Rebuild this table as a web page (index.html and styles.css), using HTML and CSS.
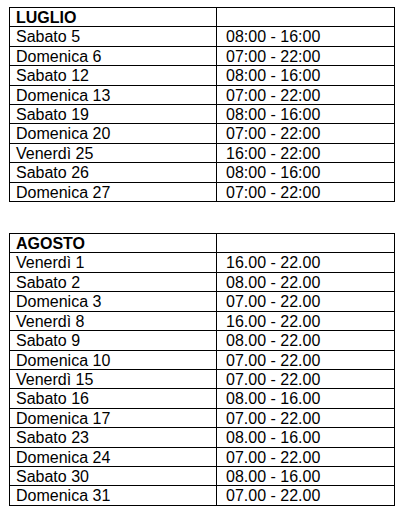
FILE: index.html
```html
<!DOCTYPE html>
<html lang="it">
<head>
<meta charset="utf-8">
<title>Orari</title>
<link rel="stylesheet" href="styles.css">
</head>
<body>
<div class="page">
  <table class="sched">
    <colgroup><col class="c1"><col class="c2"></colgroup>
    <tr class="head"><td>LUGLIO</td><td></td></tr>
    <tr><td>Sabato 5</td><td class="t">08:00 - 16:00</td></tr>
    <tr><td>Domenica 6</td><td class="t">07:00 - 22:00</td></tr>
    <tr><td>Sabato 12</td><td class="t">08:00 - 16:00</td></tr>
    <tr><td>Domenica 13</td><td class="t">07:00 - 22:00</td></tr>
    <tr><td>Sabato 19</td><td class="t">08:00 - 16:00</td></tr>
    <tr><td>Domenica 20</td><td class="t">07:00 - 22:00</td></tr>
    <tr><td>Venerdì 25</td><td class="t">16:00 - 22:00</td></tr>
    <tr><td>Sabato 26</td><td class="t">08:00 - 16:00</td></tr>
    <tr><td>Domenica 27</td><td class="t">07:00 - 22:00</td></tr>
  </table>
  <table class="sched">
    <colgroup><col class="c1"><col class="c2"></colgroup>
    <tr class="head"><td>AGOSTO</td><td></td></tr>
    <tr><td>Venerdì 1</td><td class="t">16.00 - 22.00</td></tr>
    <tr><td>Sabato 2</td><td class="t">08.00 - 22.00</td></tr>
    <tr><td>Domenica 3</td><td class="t">07.00 - 22.00</td></tr>
    <tr><td>Venerdì 8</td><td class="t">16.00 - 22.00</td></tr>
    <tr><td>Sabato 9</td><td class="t">08.00 - 22.00</td></tr>
    <tr><td>Domenica 10</td><td class="t">07.00 - 22.00</td></tr>
    <tr><td>Venerdì 15</td><td class="t">07.00 - 22.00</td></tr>
    <tr><td>Sabato 16</td><td class="t">08.00 - 16.00</td></tr>
    <tr><td>Domenica 17</td><td class="t">07.00 - 22.00</td></tr>
    <tr><td>Sabato 23</td><td class="t">08.00 - 16.00</td></tr>
    <tr><td>Domenica 24</td><td class="t">07.00 - 22.00</td></tr>
    <tr><td>Sabato 30</td><td class="t">08.00 - 16.00</td></tr>
    <tr><td>Domenica 31</td><td class="t">07.00 - 22.00</td></tr>
  </table>
</div>
</body>
</html>
```
FILE: styles.css
```css
html, body {
  margin: 0;
  padding: 0;
  background: #fff;
}
.page {
  padding: 7px 0 0 9px;
  display: flex;
  flex-direction: column;
  gap: 31px;
  font-family: "Liberation Sans", Arial, sans-serif;
  font-size: 16px;
  color: #000;
}
.sched {
  border-collapse: collapse;
  table-layout: fixed;
  width: 385px;
}
.c1 { width: 207px; }
.c2 { width: 178px; }
.sched td {
  border: 1px solid #000;
  padding: 1px 0 0 6px;
  line-height: 17.4px;
  vertical-align: top;
  white-space: nowrap;
}
.sched td.t {
  padding-left: 9px;
}
.head td {
  font-weight: bold;
}
```
